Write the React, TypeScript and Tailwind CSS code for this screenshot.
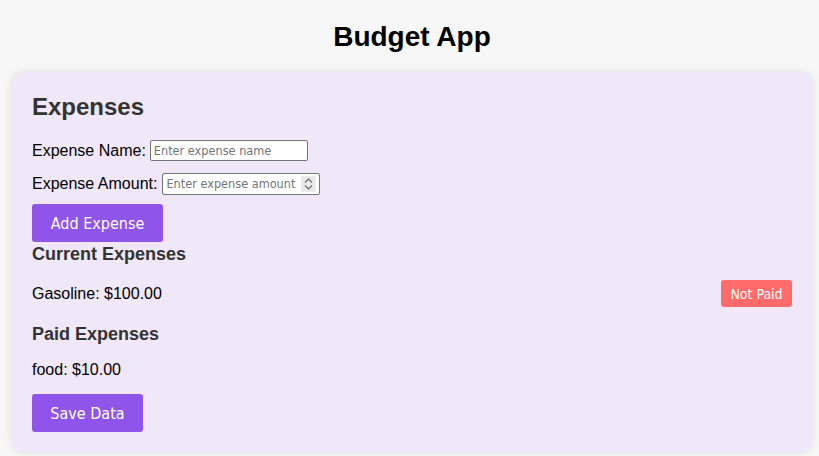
import React from 'react';

const tahomaLike = "font-['DejaVu_Sans_Condensed','DejaVu_Sans',Tahoma,sans-serif] [font-stretch:semi-condensed]";

export default function App() {
  return (
    <div className="min-h-screen bg-[#f7f7f7] pt-[18px] font-['Liberation_Sans',Arial,sans-serif] text-black">
      <h1 className="pl-[5px] text-center text-[28px] font-bold leading-[38px] mb-[16px]">Budget App</h1>

      {/* Tarjeta principal */}
      <div className="ml-3 w-[800px] rounded-[10px] bg-[#f0e7f8] px-5 pt-[20px] pb-[20px] shadow-[0_0_10px_rgba(0,0,0,0.1)]">
        <h2 className="text-[24px] font-bold text-[#333] leading-[30px] mb-[18px]">Expenses</h2>

        <div className="flex items-center h-[21px] text-[16px] mb-[12px]">
          <label className="mr-[4px]">Expense Name:</label>
          <input
            type="text"
            placeholder="Enter expense name"
            className={`w-[158px] h-[21px] border border-[#767676] rounded-[2px] bg-white px-[3px] text-[12.6px] ${tahomaLike} placeholder:text-[#757575] outline-none`}
          />
        </div>

        <div className="flex items-center h-[22px] text-[16px] mb-[9px]">
          <label className="mr-[5px]">Expense Amount:</label>
          <div className="flex items-center w-[158px] h-[22px] border border-[#767676] rounded-[2px] bg-white pl-[3px] pr-[3px]">
            <input
              type="text"
              placeholder="Enter expense amount"
              className={`w-0 flex-1 text-[12.6px] ${tahomaLike} placeholder:text-[#757575] outline-none bg-transparent`}
            />
            <div className="flex flex-col items-center justify-center w-[15px] h-[16px] bg-[#e9e9e9]">
              <svg width="9" height="14" viewBox="0 0 9 14" fill="none" stroke="#6b6b6b" strokeWidth="1.2">
                <path d="M1 5.5 L4.5 2 L8 5.5" />
                <path d="M1 8.5 L4.5 12 L8 8.5" />
              </svg>
            </div>
          </div>
        </div>

        <button className={`w-[131px] h-[38px] pt-[2px] rounded-[3px] bg-[#8f54e9] text-white text-[16px] ${tahomaLike}`}>
          Add Expense
        </button>

        <h3 className="text-[18px] font-bold text-[#333] leading-[22px] mt-[1px] mb-[15px]">Current Expenses</h3>

        <div className="flex items-center justify-between h-[27px] text-[16px] mb-[16px]">
          <span>Gasoline: $100.00</span>
          <button className={`w-[71px] h-[27px] pt-[1px] rounded-[3px] bg-[#ff6b6b] text-white text-[14px] ${tahomaLike}`}>
            Not Paid
          </button>
        </div>

        <h3 className="text-[18px] font-bold text-[#333] leading-[22px] mb-[16px]">Paid Expenses</h3>

        <div className="text-[16px] leading-[18px] mb-[15px]">food: $10.00</div>

        <button className={`w-[111px] h-[38px] pt-[2px] rounded-[3px] bg-[#8f54e9] text-white text-[16px] ${tahomaLike}`}>
          Save Data
        </button>
      </div>
    </div>
  );
}
